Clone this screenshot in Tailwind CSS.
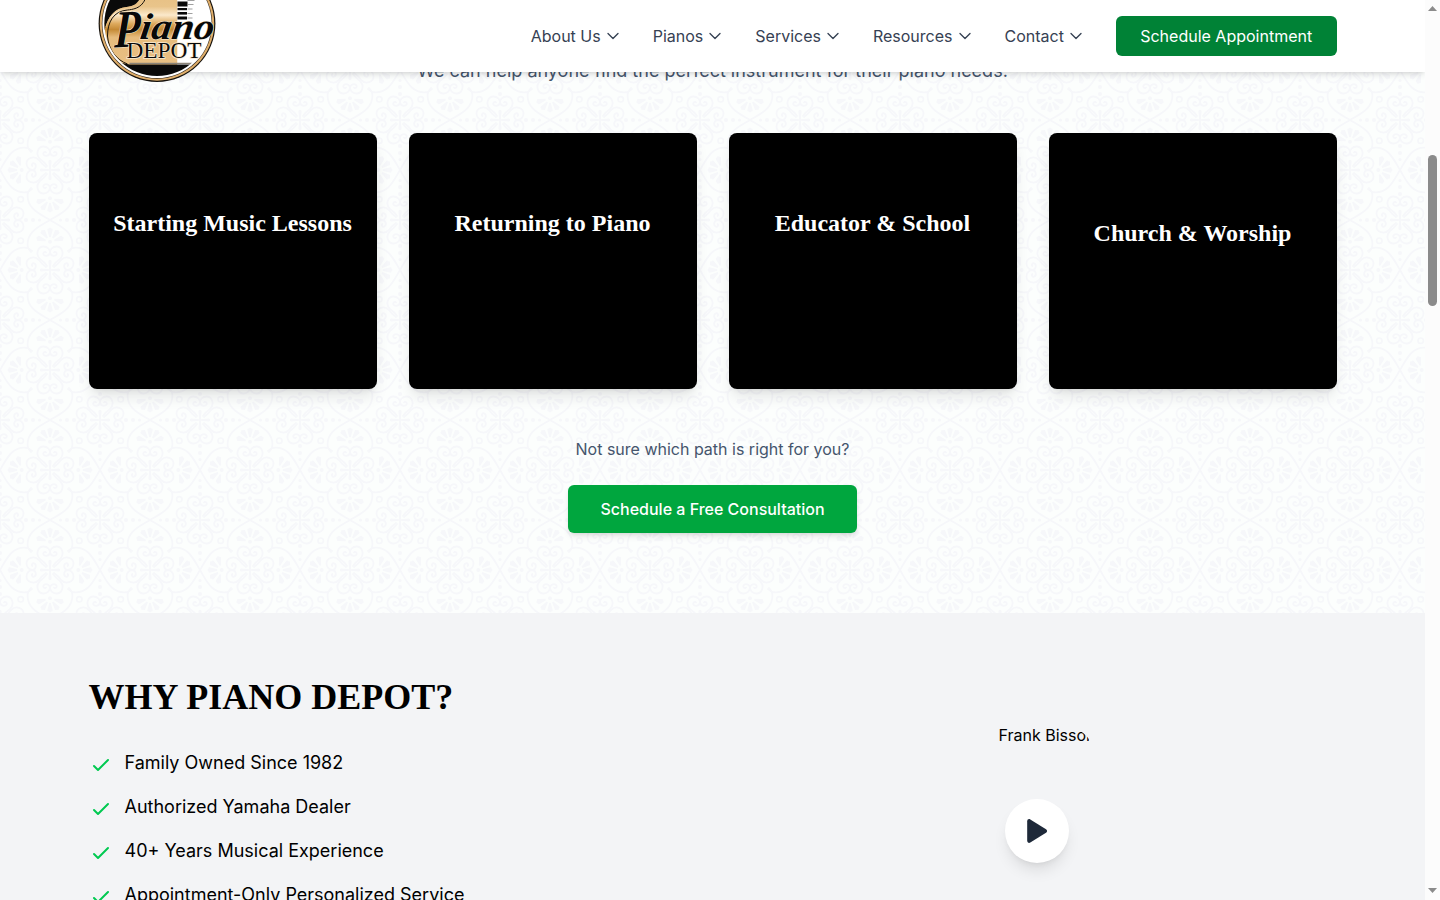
<!DOCTYPE html>
<html lang="en">
<head>
<meta charset="utf-8">
<title>Piano Depot</title>
<script src="https://cdn.jsdelivr.net/npm/@tailwindcss/browser@4"></script>
</head>
<body class="h-[900px] overflow-hidden bg-white font-['Inter',sans-serif] text-base text-black">
<div class="flex h-[900px] overflow-hidden">
  <div class="relative h-[900px] w-[1425px] shrink-0 overflow-hidden">

    <header class="absolute inset-x-0 top-0 z-20 h-[72px] bg-white shadow-md">
      <div class="mx-auto flex h-full max-w-7xl items-center justify-between px-4">
        <a class="relative block h-full w-[136px]">
          <svg class="absolute top-[-36px] left-[8px] h-[120px] w-[120px]" viewBox="96.5 -36 120 120">
            <defs>
              <clipPath id="disc"><circle cx="156.5" cy="23.5" r="52.6"/></clipPath>
              <linearGradient id="gold" x1="0" y1="0" x2="0" y2="1">
                <stop offset="0" stop-color="#e3b877"/><stop offset=".38" stop-color="#e9c48a"/><stop offset=".47" stop-color="#fbe9cb"/><stop offset=".56" stop-color="#dda95c"/><stop offset=".62" stop-color="#c58a35"/><stop offset=".7" stop-color="#e6bb7c"/><stop offset="1" stop-color="#e9c084"/>
              </linearGradient>
            </defs>
            <circle cx="156.5" cy="23.5" r="58.4" fill="#15110c"/>
            <circle cx="156.5" cy="23.5" r="57.2" fill="#dfae6b"/>
            <circle cx="156.5" cy="23.5" r="55.2" fill="#33281a"/>
            <circle cx="156.5" cy="23.5" r="54.6" fill="#fff"/>
            <g clip-path="url(#disc)">
              <rect x="100" y="-30" width="77" height="96" fill="url(#gold)"/>
              <rect x="177" y="-30" width="40" height="96" fill="#fff"/>
              <path d="M100-32H145C144-2 138 6 126 7C114 8 108 16 104 30L98 30Z" fill="#0a0a0a"/>
              <path d="M147-10C145 5 138 9 127 10C113 11 107 22 107 36C108 50 116 60 127 64" fill="none" stroke="#17110a" stroke-width="1"/>
              <path d="M144-10C143 2 138 6 126 7.500C114 9 108 17 105.500 27" fill="none" stroke="#e9c084" stroke-width=".9"/>
              <g fill="#0a0a0a">
                <rect x="177" y="-5" width="10" height="4.500"/><rect x="177" y="1.500" width="10" height="5"/><rect x="177" y="8" width="9.500" height="2.200"/><rect x="177" y="12" width="9.500" height="2.600"/><rect x="177" y="16.500" width="9.500" height="3"/>
              </g>
              <path d="M187 .500h7M187 4.500h6M187 9h5M187 13.500h5M187 18h5" stroke="#777" stroke-width=".7"/>
              <path d="M100 50C108 58 117 62.500 129 64.500H216V90H100Z" fill="#0a0a0a"/>
              <path d="M129 63.400H192" stroke="#8a8378" stroke-width="1.300"/>
            </g>
            <g font-family="Liberation Serif, serif">
              <text x="126" y="57.500" font-size="24" textLength="75" lengthAdjust="spacingAndGlyphs" fill="#0a0a0a" stroke="#f8ead2" stroke-width="1.600" paint-order="stroke">DEPOT</text>
              <g font-weight="bold" font-style="italic" fill="#080808" stroke="#f8ead2" stroke-width="1" paint-order="stroke">
                <text x="0" y="0" font-size="53" transform="translate(113.500 47.500) rotate(-3) skewX(-5)" textLength="26" lengthAdjust="spacingAndGlyphs">P</text>
                <text x="0" y="0" font-size="37" transform="translate(138.500 38.500) skewX(-8)" textLength="74" lengthAdjust="spacingAndGlyphs">iano</text>
              </g>
            </g>
          </svg>
        </a>
        <nav class="flex items-center gap-8 text-gray-700">
          <a class="flex items-center gap-1">About Us<svg class="h-4 w-4" viewBox="0 0 24 24" fill="none" stroke="currentColor" stroke-width="2" stroke-linecap="round" stroke-linejoin="round"><path d="m19.500 8.250-7.500 7.500-7.500-7.500"/></svg></a>
          <a class="flex items-center gap-1">Pianos<svg class="h-4 w-4" viewBox="0 0 24 24" fill="none" stroke="currentColor" stroke-width="2" stroke-linecap="round" stroke-linejoin="round"><path d="m19.500 8.250-7.500 7.500-7.500-7.500"/></svg></a>
          <a class="flex items-center gap-1">Services<svg class="h-4 w-4" viewBox="0 0 24 24" fill="none" stroke="currentColor" stroke-width="2" stroke-linecap="round" stroke-linejoin="round"><path d="m19.500 8.250-7.500 7.500-7.500-7.500"/></svg></a>
          <a class="flex items-center gap-1">Resources<svg class="h-4 w-4" viewBox="0 0 24 24" fill="none" stroke="currentColor" stroke-width="2" stroke-linecap="round" stroke-linejoin="round"><path d="m19.500 8.250-7.500 7.500-7.500-7.500"/></svg></a>
          <a class="flex items-center gap-1">Contact<svg class="h-4 w-4" viewBox="0 0 24 24" fill="none" stroke="currentColor" stroke-width="2" stroke-linecap="round" stroke-linejoin="round"><path d="m19.500 8.250-7.500 7.500-7.500-7.500"/></svg></a>
          <a class="w-[220.6px] rounded-md bg-green-700 py-2 text-center text-white">Schedule Appointment</a>
        </nav>
      </div>
    </header>

    <section class="relative h-[613px] bg-[#fcfefd]">
      <!-- Damask wallpaper -->
      <svg class="absolute inset-0 h-full w-full" aria-hidden="true">
        <defs>
          <path id="curl" d="M-3-4C-5-7-7-9-10-11C-15-16-12-23.500-6.500-23.500C-2.500-23.500 0-20.500 0-17.500C-.5-14-5-13.200-6.500-15.500C-7.500-17.500-5-19-4-17.600" fill="none" stroke-width="1.800" stroke-linecap="round"/>
          <g id="heart"><use href="#curl"/><use href="#curl" transform="scale(-1 1)"/><path d="M-.8 0L-1.600-9Q0-11.500 1.600-9L.8 0Z" stroke="none"/></g>
          <g id="medal"><use href="#heart"/><use href="#heart" transform="rotate(90)"/><use href="#heart" transform="rotate(180)"/><use href="#heart" transform="rotate(270)"/></g>
          <path id="petal" d="M-.7-4.500L-2.700-12Q-2.700-13.500-1.300-13.300L0-14.500L1.300-13.300Q2.700-13.500 2.700-12L.7-4.500Z" stroke="none"/>
          <g id="side">
            <g transform="translate(0 -28.300)"><circle r="2" stroke="none"/><use href="#petal"/><use href="#petal" transform="rotate(36)"/><use href="#petal" transform="rotate(-36)"/><use href="#petal" transform="rotate(74)"/><use href="#petal" transform="rotate(-74)"/></g>
            <path d="M0-50C-10-44-25-38-22-22L-18-19M0-50C10-44 25-38 22-22L18-19" fill="none" stroke-width="1.800" stroke-linecap="round"/>
            <circle cx="29.300" cy="-29.300" r="2.700" fill="none" stroke-width="1.700"/>
            <g stroke="none"><circle cx="-24" cy="-50" r="2"/><circle cx="-17" cy="-50" r="2"/><circle cx="-10.500" cy="-50" r="1.600"/><circle cx="24" cy="-50" r="2"/><circle cx="17" cy="-50" r="2"/><circle cx="10.500" cy="-50" r="1.600"/></g>
          </g>
          <pattern id="damask" width="100" height="100" y="20" patternUnits="userSpaceOnUse">
            <g fill="#f6f7fa" stroke="#f6f7fa">
              <g transform="translate(50 50)"><use href="#medal"/><use href="#side"/><use href="#side" transform="rotate(90)"/><use href="#side" transform="rotate(180)"/><use href="#side" transform="rotate(270)"/></g>
              <use href="#medal"/><use href="#medal" x="100"/><use href="#medal" y="100"/><use href="#medal" x="100" y="100"/>
            </g>
          </pattern>
        </defs>
        <rect width="100%" height="100%" fill="url(#damask)"/>
      </svg>
      <div class="relative mx-auto flex max-w-7xl flex-col items-center px-4 pt-[57px]">
        <p class="text-lg text-slate-600">We can help anyone find the perfect instrument for their piano needs.</p>
        <div class="mt-12 grid w-full grid-cols-4 gap-8 text-center font-['Liberation_Serif',serif] text-2xl font-bold text-white">
          <div class="h-64 rounded-lg bg-black pt-[74px] shadow-lg">Starting Music Lessons</div>
          <div class="h-64 rounded-lg bg-black pt-[74px] shadow-lg">Returning to Piano</div>
          <div class="h-64 rounded-lg bg-black pt-[74px] shadow-lg">Educator &amp; School</div>
          <div class="h-64 rounded-lg bg-black pt-[84px] shadow-lg">Church &amp; Worship</div>
        </div>
        <p class="mt-12 text-slate-600">Not sure which path is right for you?</p>
        <a class="mt-6 rounded-md bg-green-600 px-8 py-3 font-medium text-white shadow-md">Schedule a Free Consultation</a>
      </div>
    </section>

    <section class="h-[400px] bg-gray-100">
      <div class="mx-auto flex max-w-7xl px-4 pt-16">
        <div class="w-[648px]">
          <h2 class="font-['Liberation_Serif',serif] text-4xl font-bold">WHY PIANO DEPOT?</h2>
          <ul class="mt-8 space-y-4 text-lg">
            <li class="flex items-start gap-3"><svg class="mt-1 h-6 w-6" viewBox="0 0 24 24" fill="none" stroke="#00c951" stroke-width="2" stroke-linecap="round" stroke-linejoin="round"><path d="M5 13l4 4L19 7"/></svg>Family Owned Since 1982</li>
            <li class="flex items-start gap-3"><svg class="mt-1 h-6 w-6" viewBox="0 0 24 24" fill="none" stroke="#00c951" stroke-width="2" stroke-linecap="round" stroke-linejoin="round"><path d="M5 13l4 4L19 7"/></svg>Authorized Yamaha Dealer</li>
            <li class="flex items-start gap-3"><svg class="mt-1 h-6 w-6" viewBox="0 0 24 24" fill="none" stroke="#00c951" stroke-width="2" stroke-linecap="round" stroke-linejoin="round"><path d="M5 13l4 4L19 7"/></svg>40+ Years Musical Experience</li>
            <li class="flex items-start gap-3"><svg class="mt-1 h-6 w-6" viewBox="0 0 24 24" fill="none" stroke="#00c951" stroke-width="2" stroke-linecap="round" stroke-linejoin="round"><path d="M5 13l4 4L19 7"/></svg>Appointment-Only Personalized Service</li>
          </ul>
        </div>
        <div class="flex w-[600px] flex-col items-center pt-[50px]">
          <div class="h-[72px] w-[115px] overflow-hidden rounded-tr-[28px] pl-[19.500px] whitespace-nowrap"><span class="-mt-1 block">Frank Bisson</span></div>
          <div class="flex h-16 w-16 items-center justify-center rounded-full bg-white shadow-lg">
            <svg class="h-8 w-8" viewBox="0 0 32 32" fill="#1e2939"><path d="M6.200 6.200C6.200 4.500 7.800 3.500 9.300 4.400L25 14.200C26.400 15.100 26.400 16.900 25 17.800L9.300 27.600C7.800 28.500 6.200 27.500 6.200 25.800Z"/></svg>
          </div>
        </div>
      </div>
    </section>
  </div>

  <!-- Page scrollbar -->
  <div class="flex w-[15px] shrink-0 flex-col items-center bg-[#fcfcfc]">
    <svg class="mt-[6px] h-[5px] w-[9px]" viewBox="0 0 9 5" fill="#8b8b8b"><path d="M4.500 0L9 5H0Z"/></svg>
    <div class="mt-[144px] h-[151px] w-[9px] rounded-full bg-[#8b8b8b]"></div>
    <svg class="mt-auto mb-[7px] h-[5px] w-[9px]" viewBox="0 0 9 5" fill="#8b8b8b"><path d="M0 0H9L4.500 5Z"/></svg>
  </div>
</div>
</body>
</html>
